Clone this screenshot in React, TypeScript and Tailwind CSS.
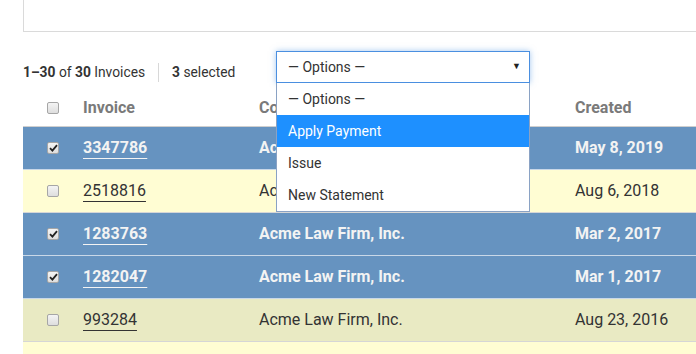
import React from 'react'

const rows = [
  { id: '3347786', company: 'Acme Law Firm, Inc.', created: 'May 8, 2019', selected: true, bg: '' },
  { id: '2518816', company: 'Acme Law Firm, Inc.', created: 'Aug 6, 2018', selected: false, bg: 'bg-[#fffdd3]' },
  { id: '1283763', company: 'Acme Law Firm, Inc.', created: 'Mar 2, 2017', selected: true, bg: '' },
  { id: '1282047', company: 'Acme Law Firm, Inc.', created: 'Mar 1, 2017', selected: true, bg: '' },
  { id: '993284', company: 'Acme Law Firm, Inc.', created: 'Aug 23, 2016', selected: false, bg: 'bg-[#e9eac3]' },
  { id: '', company: '', created: '', selected: false, bg: 'bg-[#fffdd3]' },
]

const options = ['— Options —', 'Apply Payment', 'Issue', 'New Statement']

function Checkbox({ checked }: { checked: boolean }) {
  return (
    <div className="w-[12px] h-[12px] rounded-[2px] border border-[#a6a6a6] bg-gradient-to-b from-[#f4f4f4] to-[#dedede] flex items-center justify-center">
      {checked && (
        <svg width="9" height="8" viewBox="0 0 9 8">
          <path d="M1 4.2 L3.4 6.6 L8 1.2" fill="none" stroke="#222" strokeWidth="1.8" />
        </svg>
      )}
    </div>
  )
}

function Cursor() {
  return (
    <svg width="13" height="20" viewBox="0 0 13 20" className="absolute left-[447px] top-[137px]">
      <path d="M1 1 L1 15 L4.5 11.8 L7 17.5 L9.2 16.5 L6.8 11 L11.5 11 Z" fill="#fff" stroke="#111" strokeWidth="1" strokeLinejoin="round" />
    </svg>
  )
}

export default function App() {
  return (
    <div className="relative w-[696px] h-[354px] overflow-hidden bg-white font-['Roboto',sans-serif] text-[#333]">
      {/* box above, cut off */}
      <div className="ml-[23px] h-[32px] border-l border-b border-[#dadada]" />

      {/* toolbar */}
      <div className="ml-[23px] h-[58px] flex items-start pt-[19px]">
        <div className="flex items-center mt-[11px] text-[13.8px] w-[253px]">
          <span>
            <b>1–30</b> of <b>30</b> Invoices
          </span>
          <span className="mx-[13px] w-px h-[19px] bg-[#d8d8d8]" />
          <span>
            <b>3</b> selected
          </span>
        </div>
        <div className="relative z-10 w-[254px]">
          <div className="h-[32px] border border-[#4a8fe0] shadow-[0_0_6px_rgba(74,143,224,0.5)] bg-white flex items-center justify-between pl-[11px] pr-[8px] text-[14px]">
            <span>— Options —</span>
            <span className="text-[9px] text-[#222]">▼</span>
          </div>
          <div className="absolute top-full left-0 w-full bg-white border border-t-0 border-[#8aa2c4] text-[14px]">
            {options.map((o) => (
              <div
                key={o}
                className={`h-[32px] flex items-center pl-[11px] ${o === 'Apply Payment' ? 'bg-[#1e90ff] text-white' : ''}`}
              >
                {o}
              </div>
            ))}
          </div>
        </div>
      </div>

      {/* table */}
      <div className="ml-[23px]">
        <div className="grid grid-cols-[60px_176px_316px_1fr] h-[37px] items-center border-b border-[#cfcfcf] text-[16px] font-bold text-[#7a7a7a]">
          <div className="flex justify-center">
            <Checkbox checked={false} />
          </div>
          <div>Invoice</div>
          <div>Company</div>
          <div>Created</div>
        </div>
        {rows.map((r, i) => (
          <div
            key={i}
            className={`grid grid-cols-[60px_176px_316px_1fr] h-[43px] items-center text-[16px] border-b ${
              r.selected
                ? 'bg-[#6693c0] text-[#f3f3f3] font-bold border-[#c9d8e8]'
                : `${r.bg} border-[#d6d6d6]`
            }`}
          >
            <div className="flex justify-center">{r.id && <Checkbox checked={r.selected} />}</div>
            <div>
              {r.id && <span className="underline underline-offset-[5px] decoration-1">{r.id}</span>}
            </div>
            <div>{r.company}</div>
            <div>{r.created}</div>
          </div>
        ))}
      </div>

      <Cursor />
    </div>
  )
}
